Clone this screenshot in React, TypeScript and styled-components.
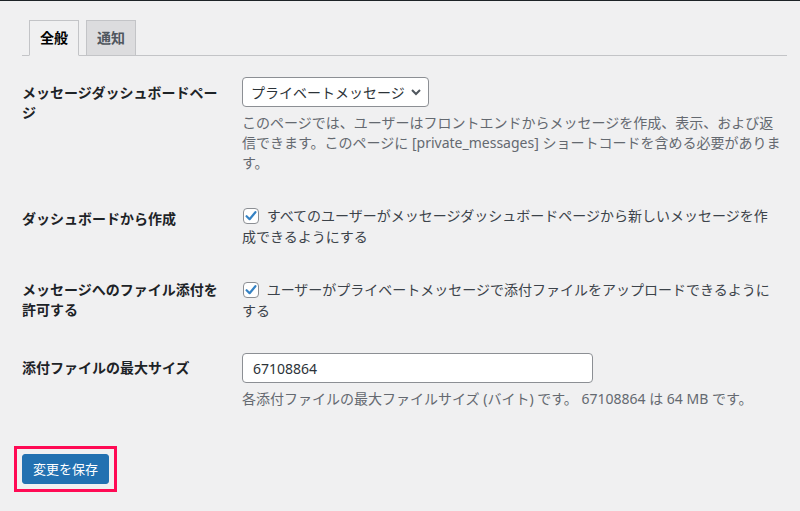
import React from "react";
import styled, { createGlobalStyle } from "styled-components";

const Global = createGlobalStyle`
  html, body { margin: 0; padding: 0; background: #f0f0f1; }
  body {
    font-family: "Noto Sans", "Noto Sans CJK JP", sans-serif;
    font-size: 14px;
    color: #3c434a;
  }
`;

const Page = styled.div`
  border-top: 1px solid #1d2327;
  padding: 19px 13px 20px 22px;
  min-height: 470px;
`;

const TabBar = styled.nav`
  display: flex;
  border-bottom: 1px solid #c3c4c7;
  padding-left: 7px;
  gap: 7px;
`;

const Tab = styled.a<{ $active?: boolean }>`
  display: block;
  padding: 5px 10px;
  line-height: 24px;
  font-size: 14px;
  font-weight: 700;
  border: 1px solid #c3c4c7;
  border-bottom-color: ${(p) => (p.$active ? "#f0f0f1" : "#c3c4c7")};
  margin-bottom: -1px;
  background: ${(p) => (p.$active ? "#f0f0f1" : "#dcdcde")};
  color: ${(p) => (p.$active ? "#000" : "#50575e")};
  text-decoration: none;
`;

const Form = styled.div`
  margin-top: 6px;
`;

const Row = styled.div`
  display: grid;
  grid-template-columns: 210px 1fr;
`;

const Label = styled.div<{ $top: number }>`
  padding: ${(p) => p.$top}px 10px 0 0;
  font-weight: 700;
  color: #1d2327;
  line-height: 20px;
`;

const Field = styled.div`
  padding: 15px 10px 17px;
  line-height: 21px;
`;

const SelectBox = styled.div`
  display: inline-flex;
  align-items: center;
  justify-content: space-between;
  box-sizing: border-box;
  height: 30px;
  padding: 0 6px 0 8px;
  gap: 5px;
  border: 1px solid #8c8f94;
  border-radius: 4px;
  background: #fff;
  color: #2c3338;
  font-size: 14px;
`;

const Description = styled.p`
  margin: 6px -8px 0 0;
  font-size: 14px;
  line-height: 20px;
  color: #646970;
`;

const CheckLabel = styled.div`
  color: #3c434a;
`;

const Box = styled.span`
  display: inline-flex;
  align-items: center;
  justify-content: center;
  box-sizing: border-box;
  width: 16px;
  height: 16px;
  border: 1px solid #8c8f94;
  border-radius: 4px;
  background: #fff;
  vertical-align: -2px;
  margin-right: 4px;
  margin-left: 1px;
`;

const TextInput = styled.div`
  box-sizing: border-box;
  width: 351px;
  height: 30px;
  display: flex;
  align-items: center;
  padding: 0 10px;
  border: 1px solid #8c8f94;
  border-radius: 4px;
  background: #fff;
  color: #2c3338;
  font-size: 14px;
`;

const Submit = styled.div`
  padding-top: 20px;
`;

const Highlight = styled.div`
  display: inline-block;
  margin-left: -8px;
  padding: 5px;
  border: 3px solid #ff0a54;
`;

const Button = styled.button`
  display: block;
  height: 30px;
  padding: 0 10px;
  border: 1px solid #2271b1;
  border-radius: 3px;
  background: #2271b1;
  color: #fff;
  font-family: inherit;
  font-size: 13px;
  line-height: 28px;
`;

const Check = () => (
  <Box>
    <svg width="14" height="14" viewBox="0 0 14 14">
      <path d="M2.6 7.2 L5.6 10.2 L11.4 3.2" fill="none" stroke="#3582c4" strokeWidth="2.2" strokeLinecap="round" strokeLinejoin="round" />
    </svg>
  </Box>
);

export default function App() {
  return (
    <>
      <Global />
      <Page>
        <TabBar>
          <Tab $active>全般</Tab>
          <Tab>通知</Tab>
        </TabBar>
        <Form>
          <Row>
            <Label $top={21}>メッセージダッシュボードページ</Label>
            <Field>
              <SelectBox>
                <span>プライベートメッセージ</span>
                <svg width="12" height="12" viewBox="0 0 12 12">
                  <path d="M2 4 L6 8 L10 4" fill="none" stroke="#50575e" strokeWidth="2" />
                </svg>
              </SelectBox>
              <Description>
                このページでは、ユーザーはフロントエンドからメッセージを作成、表示、および返信できます。このページに [private_messages] ショートコードを含める必要があります。
              </Description>
            </Field>
          </Row>
          <Row>
            <Label $top={19}>ダッシュボードから作成</Label>
            <Field>
              <CheckLabel>
                <Check /> すべてのユーザーがメッセージダッシュボードページから新しいメッセージを作成できるようにする
              </CheckLabel>
            </Field>
          </Row>
          <Row>
            <Label $top={16}>メッセージへのファイル添付を許可する</Label>
            <Field>
              <CheckLabel>
                <Check /> ユーザーがプライベートメッセージで添付ファイルをアップロードできるようにする
              </CheckLabel>
            </Field>
          </Row>
          <Row>
            <Label $top={20}>添付ファイルの最大サイズ</Label>
            <Field>
              <TextInput>67108864</TextInput>
              <Description>各添付ファイルの最大ファイルサイズ (バイト) です。 67108864 は 64 MB です。</Description>
            </Field>
          </Row>
        </Form>
        <Submit>
          <Highlight>
            <Button>変更を保存</Button>
          </Highlight>
        </Submit>
      </Page>
    </>
  );
}
